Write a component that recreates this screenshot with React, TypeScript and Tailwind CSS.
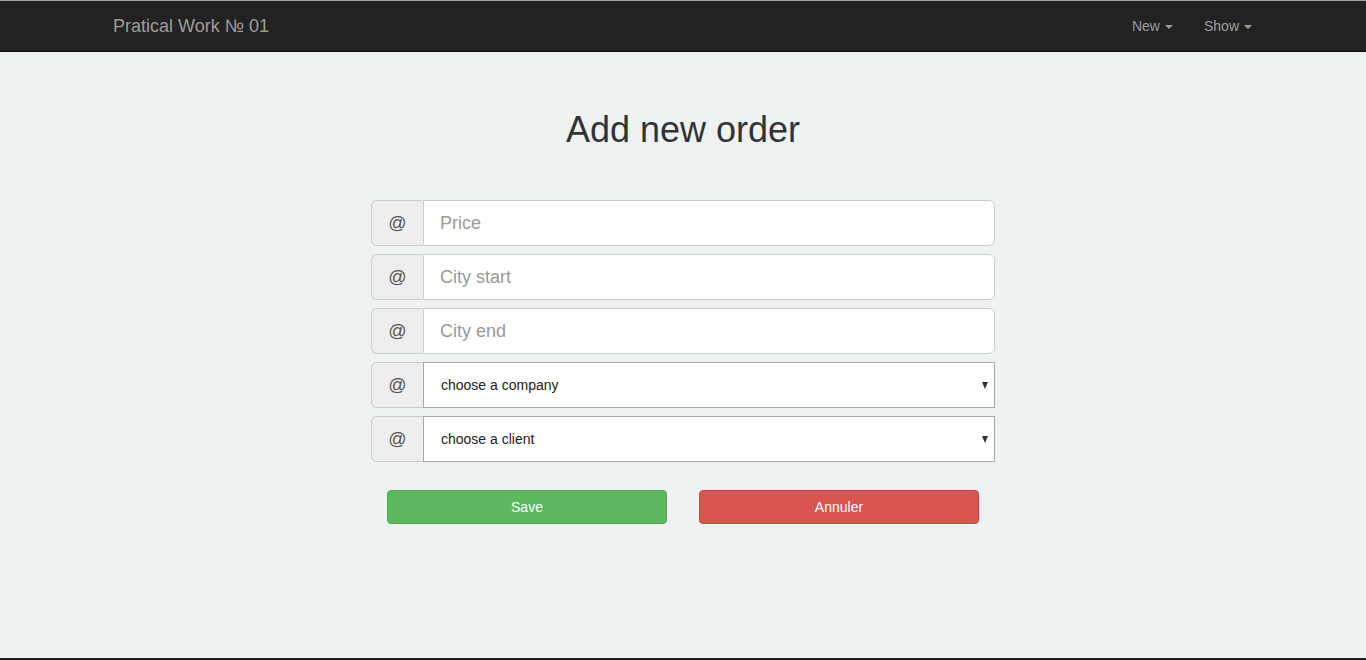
function Caret() {
  return <span className="ml-[5px] inline-block h-0 w-0 border-x-[4px] border-t-[4px] border-x-transparent border-t-[#9d9d9d] align-middle" />;
}

function AddonInput({ placeholder }: { placeholder: string }) {
  return (
    <div className="flex h-[46px] w-full">
      <span className="flex w-[52px] items-center justify-center rounded-l-[6px] border border-r-0 border-[#cccccc] bg-[#eeeeee] text-[18px] text-[#555555]">
        @
      </span>
      <input
        placeholder={placeholder}
        className="flex-1 rounded-r-[6px] border border-[#cccccc] bg-white px-4 text-[18px] text-[#555555] outline-none placeholder:text-[#999999]"
      />
    </div>
  );
}

function AddonSelect({ label }: { label: string }) {
  return (
    <div className="flex h-[46px] w-full">
      <span className="flex w-[52px] items-center justify-center rounded-l-[6px] border border-r-0 border-[#cccccc] bg-[#eeeeee] text-[18px] text-[#555555]">
        @
      </span>
      <div className="relative flex-1">
        <select className="h-full w-full appearance-none border border-[#a9a9a9] bg-white pl-[17px] text-[14px] text-[#222222] outline-none">
          <option>{label}</option>
        </select>
        <span className="pointer-events-none absolute right-[7px] top-[20px] h-0 w-0 border-x-[3.5px] border-t-[7px] border-x-transparent border-t-[#333333]" />
      </div>
    </div>
  );
}

export default function App() {
  return (
    <div className="flex h-[660px] flex-col bg-[#eef2f3] font-['Liberation_Sans',Arial,sans-serif]">
      <nav className="flex h-[52px] shrink-0 items-center border-t border-b border-t-[#a3a3a3] border-b-[#080808] bg-[#222222]">
        <div className="flex w-full items-center justify-between pl-[113px] pr-[114px]">
          <span className="text-[18px] text-[#9d9d9d]">Pratical Work № 01</span>
          <div className="flex items-center gap-[31px] text-[14px] text-[#9d9d9d]">
            <span>
              New
              <Caret />
            </span>
            <span>
              Show
              <Caret />
            </span>
          </div>
        </div>
      </nav>

      <main className="flex flex-1 flex-col items-center pt-[58px]">
        <h1 className="text-[36px] leading-[40px] text-[#333333]">Add new order</h1>

        <form className="mt-[50px] flex w-[624px] flex-col gap-[8px]">
          <AddonInput placeholder="Price" />
          <AddonInput placeholder="City start" />
          <AddonInput placeholder="City end" />
          <AddonSelect label="choose a company" />
          <AddonSelect label="choose a client" />

          <div className="mt-[20px] flex justify-center gap-[32px]">
            <button
              type="button"
              className="h-[34px] w-[280px] rounded-[4px] border border-[#4cae4c] bg-[#5cb85c] text-[14px] text-white"
            >
              Save
            </button>
            <button
              type="button"
              className="h-[34px] w-[280px] rounded-[4px] border border-[#d43f3a] bg-[#d9534f] text-[14px] text-white"
            >
              Annuler
            </button>
          </div>
        </form>
      </main>

      <div className="h-[2px] shrink-0 bg-[#1e1e1e]" />
    </div>
  );
}
